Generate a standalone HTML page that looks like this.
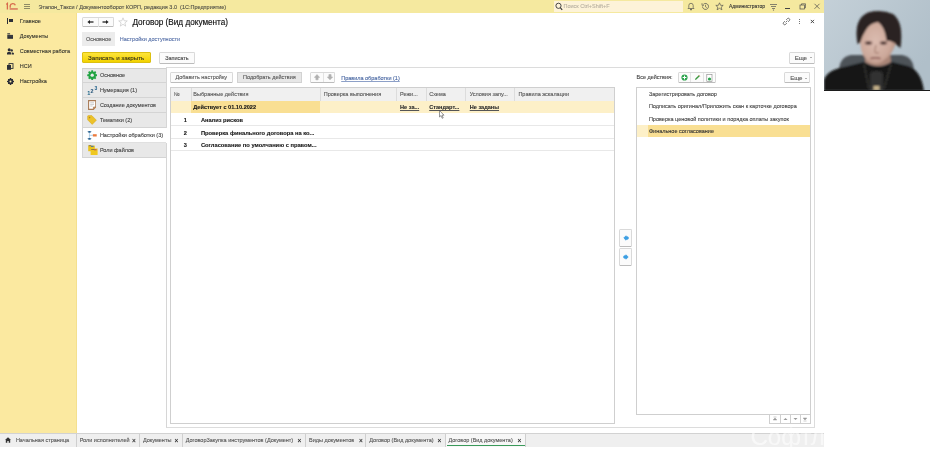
<!DOCTYPE html>
<html><head><meta charset="utf-8">
<style>
*{margin:0;padding:0;box-sizing:border-box}
html,body{width:930px;height:452px;overflow:hidden;background:#fff;font-family:"Liberation Sans",sans-serif;color:#333}
body{position:relative}
html{will-change:transform}
.a{position:absolute}
.t{position:absolute;white-space:nowrap;font-size:5.5px;line-height:7px;color:#404040;-webkit-text-stroke:0.1px currentColor}
.b{font-weight:bold;-webkit-text-stroke:0.1px currentColor}
#top{left:0;top:0;width:824px;height:13px;background:#f5e99f}
#side{left:0;top:13px;width:77px;height:420px;background:#fbe9a0;border-right:1px solid #f4e08e}
#tabs{left:0;top:433px;width:824px;height:14px;background:#efefef;border-top:1px solid #d2d2d2}
#cam{left:824px;top:0;width:106px;height:91px;background:#b4c2cb;overflow:hidden}
.btn{position:absolute;background:#fbfbfb;border:1px solid #d9d9d9;border-bottom-color:#bcbcbc;border-radius:1.5px}
.lnk{color:#4564a0;text-decoration:underline;text-decoration-skip-ink:none;text-decoration-thickness:0.5px;text-underline-offset:0.8px;text-decoration-color:#8da0c8}
.vl{position:absolute;width:1px;background:#dcdcdc}
.hl{position:absolute;height:1px;background:#e8e8e8}
.pi{position:absolute;left:82px;width:84px;height:15px;background:#e8e8e8;border-bottom:1px solid #d4d4d4;border-left:1px solid #d6d6d6}
.tab{position:absolute;top:434px;height:13px;border-left:1px solid #cfcfcf}
.x{position:absolute;font-size:6.5px;line-height:7px;color:#333;font-weight:bold}
</style></head><body>
<!-- ===== TOP BAR ===== -->
<div id="top" class="a"></div>
<svg class="a" style="left:5px;top:2px" width="14" height="9" viewBox="0 0 14 9">
  <path d="M1.3 2.4 L2.4 1.4 L2.4 7.6" stroke="#d86a4c" stroke-width="1.3" fill="none"/>
  <path d="M10.3 3.3 A2.6 2.3 0 0 0 5.2 3.6 L5.2 5.8" stroke="#d86a4c" stroke-width="1.3" fill="none"/>
  <rect x="4.6" y="6.2" width="8.2" height="1.5" fill="#d8765a"/>
</svg>
<div class="a" style="left:24px;top:3.8px;width:6px;height:0.9px;background:#8f8b66"></div>
<div class="a" style="left:24px;top:6px;width:6px;height:0.9px;background:#8f8b66"></div>
<div class="a" style="left:24px;top:8.2px;width:6px;height:0.9px;background:#8f8b66"></div>
<div class="t" style="left:38.5px;top:3.6px;color:#4e4e46">Этапон_Такси / Документооборот КОРП, редакция 3.0&nbsp; (1С:Предприятие)</div>
<div class="a" style="left:554px;top:1px;width:129px;height:11px;background:#fdf3d8"></div>
<svg class="a" style="left:555px;top:2px" width="8" height="9" viewBox="0 0 8 9"><circle cx="3.5" cy="3.8" r="2.6" stroke="#333" stroke-width="0.9" fill="none"/><path d="M5.3 5.7 L7.2 7.8" stroke="#333" stroke-width="1.1"/></svg>
<div class="t" style="left:563.5px;top:3px;color:#b8b0a0">Поиск Ctrl+Shift+F</div>
<!-- bell -->
<svg class="a" style="left:687px;top:2px" width="8" height="9" viewBox="0 0 8 9"><path d="M1 6.5 L1.8 5.5 L1.8 3.5 A2.2 2.2 0 0 1 6.2 3.5 L6.2 5.5 L7 6.5 Z" stroke="#4a4a4a" stroke-width="0.65" fill="none"/><circle cx="4" cy="7.6" r="0.8" fill="#444"/></svg>
<!-- history -->
<svg class="a" style="left:701px;top:2px" width="9" height="9" viewBox="0 0 9 9"><path d="M1.5 4.5 A3 3 0 1 0 2.4 2.3" stroke="#4a4a4a" stroke-width="0.7" fill="none"/><path d="M4.5 2.8 L4.5 4.7 L5.8 5.6" stroke="#4a4a4a" stroke-width="0.65" fill="none"/><path d="M1 1.2 L1 3.3 L3 3.3" stroke="#4a4a4a" stroke-width="0.65" fill="none"/></svg>
<!-- star -->
<svg class="a" style="left:715px;top:2px" width="9" height="9" viewBox="0 0 9 9"><path d="M4.5 0.8 L5.6 3.3 L8.2 3.4 L6.2 5.1 L6.9 7.8 L4.5 6.3 L2.1 7.8 L2.8 5.1 L0.8 3.4 L3.4 3.3 Z" stroke="#4a4a4a" stroke-width="0.65" fill="none"/></svg>
<div class="t" style="left:729px;top:3px;font-size:5px;color:#333">Администратор</div>
<svg class="a" style="left:769px;top:2px" width="9" height="9" viewBox="0 0 9 9"><path d="M1 2.5 H8 M2 4.5 H7 M3 6.5 H6" stroke="#555" stroke-width="0.7"/><circle cx="4.5" cy="8" r="0.6" fill="#555"/></svg>
<div class="a" style="left:785px;top:8px;width:5px;height:1px;background:#444"></div>
<svg class="a" style="left:798px;top:2px" width="9" height="9" viewBox="0 0 9 9"><rect x="2" y="3" width="4.5" height="4" stroke="#4a4a4a" stroke-width="0.7" fill="none"/><path d="M3.5 3 V1.8 H7.5 V5.8 H6.5" stroke="#4a4a4a" stroke-width="0.65" fill="none"/></svg>
<svg class="a" style="left:813px;top:2px" width="8" height="9" viewBox="0 0 8 9"><path d="M1.5 1.8 L6.5 6.8 M6.5 1.8 L1.5 6.8" stroke="#4a4a4a" stroke-width="0.7"/></svg>

<!-- ===== SIDEBAR ===== -->
<div id="side" class="a"></div>
<div class="a" style="left:7px;top:17.7px;width:1.2px;height:6.6px;background:#2d2f38"></div>
<div class="a" style="left:9px;top:18.7px;width:4px;height:3px;background:#2d2f38"></div>
<div class="t" style="left:19.8px;top:17.7px;color:#36362e">Главное</div>
<svg class="a" style="left:7px;top:33px" width="7" height="6" viewBox="0 0 7 6"><rect x="0.3" y="0.3" width="2.8" height="1.1" fill="#2d2f38"/><rect x="0.3" y="1.9" width="5.7" height="3.9" fill="#2d2f38"/><rect x="0.3" y="2.8" width="5.7" height="0.4" fill="#6a6a60"/></svg>
<div class="t" style="left:19.8px;top:32.9px;color:#36362e">Документы</div>
<svg class="a" style="left:7px;top:48px" width="7" height="7" viewBox="0 0 7 7"><circle cx="2.2" cy="1.8" r="1.5" fill="#2d2f38"/><path d="M0 6.5 V4.7 Q2.2 3 4.2 4.7 V6.5Z" fill="#2d2f38"/><circle cx="4.7" cy="2.4" r="1.2" fill="#2d2f38"/><path d="M4.8 6.5 V4.6 Q6 4 6.9 5 V6.5Z" fill="#2d2f38"/></svg>
<div class="t" style="left:19.8px;top:47.8px;color:#36362e">Совместная работа</div>
<svg class="a" style="left:7px;top:63px" width="7" height="7" viewBox="0 0 7 7"><rect x="0" y="2" width="4" height="4.8" fill="#2d2f38"/><rect x="2" y="0.6" width="4" height="4.8" fill="none" stroke="#2d2f38" stroke-width="0.9"/></svg>
<div class="t" style="left:19.8px;top:62.8px;color:#36362e">НСИ</div>
<svg class="a" style="left:7px;top:78px" width="7" height="7" viewBox="0 0 7 7"><circle cx="3.5" cy="3.5" r="2.2" fill="none" stroke="#2d2f38" stroke-width="1.4"/><path d="M3.5 0 V7 M0 3.5 H7 M1 1 L6 6 M6 1 L1 6" stroke="#2d2f38" stroke-width="1"/><circle cx="3.5" cy="3.5" r="1" fill="#fbe9a0"/></svg>
<div class="t" style="left:19.8px;top:77.5px;color:#36362e">Настройка</div>

<!-- ===== TABS BAR ===== -->
<div id="tabs" class="a"></div>
<svg class="a" style="left:5px;top:437px" width="6" height="6" viewBox="0 0 6 6"><path d="M0 3 L3 0.2 L6 3 L5.2 3 L5.2 5.8 L3.7 5.8 L3.7 4 L2.3 4 L2.3 5.8 L0.8 5.8 L0.8 3Z" fill="#333"/></svg>
<div class="t" style="left:15.9px;top:436.5px;color:#555">Начальная страница</div>
<div class="tab" style="left:75.5px"></div>
<div class="t" style="left:79.7px;top:436.5px;color:#555">Роли исполнителей</div><div class="x" style="left:132px;top:436.5px">×</div>
<div class="tab" style="left:139px"></div>
<div class="t" style="left:143px;top:436.5px;color:#555">Документы</div><div class="x" style="left:174.5px;top:436.5px">×</div>
<div class="tab" style="left:181.5px"></div>
<div class="t" style="left:185.7px;top:436.5px;color:#555">ДоговорЗакупка инструментов (Документ)</div><div class="x" style="left:297.5px;top:436.5px">×</div>
<div class="tab" style="left:305px"></div>
<div class="t" style="left:309px;top:436.5px;color:#555">Виды документов</div><div class="x" style="left:359px;top:436.5px">×</div>
<div class="tab" style="left:365px"></div>
<div class="t" style="left:369.3px;top:436.5px;color:#555">Договор (Вид документа)</div><div class="x" style="left:437.5px;top:436.5px">×</div>
<div class="tab" style="left:445px;width:81px;background:#f7f7f7;border-right:1px solid #cfcfcf"></div>
<div class="a" style="left:447px;top:445px;width:78px;height:1px;background:#3a9a5a"></div>
<div class="t" style="left:448.5px;top:436.5px;color:#555">Договор (Вид документа)</div><div class="x" style="left:517.5px;top:436.5px">×</div>

<!-- ===== FORM HEADER ===== -->
<div class="btn" style="left:82px;top:17px;width:31.5px;height:10px"></div>
<div class="a" style="left:97.5px;top:18px;width:1px;height:8.5px;background:#e0e0e0"></div>
<svg class="a" style="left:86.8px;top:19.3px" width="7" height="6" viewBox="0 0 7 6"><path d="M2.5 3 H6.5" stroke="#222" stroke-width="1.3"/><path d="M0.4 3 L3 0.9 L3 5.1Z" fill="#222"/></svg>
<svg class="a" style="left:101.5px;top:19.3px" width="7" height="6" viewBox="0 0 7 6"><path d="M0.5 3 H4.5" stroke="#222" stroke-width="1.3"/><path d="M6.6 3 L4 0.9 L4 5.1Z" fill="#222"/></svg>
<svg class="a" style="left:118px;top:17px" width="10" height="10" viewBox="0 0 10 10"><path d="M5 0.8 L6.2 3.8 L9.3 3.9 L6.9 5.9 L7.7 9.1 L5 7.3 L2.3 9.1 L3.1 5.9 L0.7 3.9 L3.8 3.8 Z" stroke="#c8c8c8" stroke-width="0.7" fill="none"/></svg>
<div class="t" style="left:132.4px;top:17.8px;font-size:8.2px;line-height:10px;color:#111;-webkit-text-stroke:0.15px #111">Договор (Вид документа)</div>
<svg class="a" style="left:782px;top:17px" width="9" height="9" viewBox="0 0 9 9"><path d="M3.6 5.4 L5.4 3.6" stroke="#555" stroke-width="0.8"/><path d="M4.2 2.8 L5.3 1.7 A1.3 1.3 0 0 1 7.3 3.7 L6.2 4.8 M4.8 6.2 L3.7 7.3 A1.3 1.3 0 0 1 1.7 5.3 L2.8 4.2" stroke="#555" stroke-width="0.85" fill="none"/></svg>
<div class="a" style="left:798.5px;top:18.5px;width:1.1px;height:1.1px;background:#777"></div>
<div class="a" style="left:798.5px;top:20.5px;width:1.1px;height:1.1px;background:#777"></div>
<div class="a" style="left:798.5px;top:22.5px;width:1.1px;height:1.1px;background:#777"></div>
<svg class="a" style="left:810px;top:19.2px" width="5" height="5" viewBox="0 0 5 5"><path d="M0.8 0.9 L4 4.1 M4 0.9 L0.8 4.1" stroke="#3a3a3a" stroke-width="0.9"/></svg>

<div class="a" style="left:82px;top:32px;width:33px;height:14px;background:#ececec"></div>
<div class="t" style="left:86px;top:35.8px;color:#555">Основное</div>
<div class="t" style="left:119.8px;top:35.8px;color:#5670a8">Настройки доступности</div>

<div class="a" style="left:82px;top:52px;width:68.5px;height:10.8px;background:linear-gradient(#fde43a,#f2d200);border:1px solid #dcc010;border-radius:1px"></div>
<div class="t" style="left:88px;top:53.8px;font-size:6.2px;color:#1a1a1a;-webkit-text-stroke:0.05px #1a1a1a">Записать и закрыть</div>
<div class="btn" style="left:159.4px;top:52.1px;width:35.2px;height:11.5px"></div>
<div class="t" style="left:165.2px;top:54.5px;color:#444">Записать</div>
<div class="btn" style="left:789.2px;top:52px;width:25.4px;height:11.5px"></div>
<div class="t" style="left:794.8px;top:54.2px;color:#555;font-size:6.2px;letter-spacing:-0.25px">Еще</div>
<div class="a" style="left:810px;top:57.2px;width:0;height:0;border-left:1px solid transparent;border-right:1px solid transparent;border-top:1.4px solid #666"></div>

<!-- ===== LEFT PANEL ===== -->
<div class="pi" style="top:67.5px;border-top:1px solid #d0d0d0"></div>
<div class="pi" style="top:82.5px"></div>
<div class="pi" style="top:97.5px"></div>
<div class="pi" style="top:112.5px"></div>
<div class="pi" style="top:127.5px;background:#fff;border-bottom-color:#e0e0e0"></div>
<div class="pi" style="top:142.5px"></div>
<div class="t" style="left:99.9px;top:72.3px;color:#444">Основное</div>
<div class="t" style="left:99.9px;top:87.3px;color:#444">Нумерация (1)</div>
<div class="t" style="left:99.9px;top:102.3px;color:#444">Создание документов</div>
<div class="t" style="left:99.9px;top:117.3px;color:#444">Тематики (2)</div>
<div class="t" style="left:99.9px;top:132.3px;color:#444">Настройки обработки (3)</div>
<div class="t" style="left:99.9px;top:147.3px;color:#444">Роли файлов</div>
<!-- panel icons -->
<svg class="a" style="left:86.6px;top:69.6px" width="10.4" height="10.4" viewBox="0 0 10 10"><g fill="#22a443"><circle cx="5" cy="5" r="3.6"/><rect x="4.1" y="0.2" width="1.8" height="9.6" rx="0.4"/><rect x="0.2" y="4.1" width="9.6" height="1.8" rx="0.4"/><rect x="4.1" y="0.2" width="1.8" height="9.6" rx="0.4" transform="rotate(45 5 5)"/><rect x="0.2" y="4.1" width="9.6" height="1.8" rx="0.4" transform="rotate(45 5 5)"/></g><circle cx="5" cy="5" r="1.6" fill="#ececec"/></svg>
<svg class="a" style="left:86.5px;top:84.5px" width="11" height="11" viewBox="0 0 11 11"><text x="0.3" y="10" font-size="5.6" font-family="Liberation Sans" font-weight="bold" fill="#1d6487">1</text><text x="3.6" y="7.6" font-size="5.4" font-family="Liberation Sans" font-weight="bold" fill="#1f4f75">2</text><text x="7.5" y="4.5" font-size="5" font-family="Liberation Sans" font-weight="bold" fill="#1e5f8a">3</text></svg>
<svg class="a" style="left:87.8px;top:100px" width="8.4" height="10" viewBox="0 0 8.4 10"><path d="M0.6 0.6 H7.8 V7 L5.4 9.4 H0.6Z" fill="#fff" stroke="#a87a55" stroke-width="1.1"/><path d="M2.2 2.8 H6 M2.2 4.4 H6 M2.2 6 H4.6" stroke="#aaa" stroke-width="0.6"/><path d="M5.4 9.4 V7 H7.8" fill="#c89060" stroke="#a87a55" stroke-width="0.6"/></svg>
<svg class="a" style="left:86.8px;top:114.6px" width="10" height="10" viewBox="0 0 10 10"><path d="M0.6 1.4 Q0.6 0.6 1.4 0.6 L4.8 0.6 L9.4 5.2 L5.2 9.4 L0.6 4.8Z" fill="#ecc22a" stroke="#d4a418" stroke-width="0.5"/><circle cx="2.6" cy="2.6" r="0.8" fill="#b08a20"/></svg>
<svg class="a" style="left:87px;top:129.5px" width="10" height="11" viewBox="0 0 10 11"><path d="M2.4 2.5 V8 M2.4 5.3 H6" stroke="#7ab0d8" stroke-width="0.6"/><path d="M0.4 1.8 Q2.4 0 4.6 1.8 Q2.4 3.6 0.4 1.8Z" fill="#1f5a8a"/><path d="M0.4 8.8 Q2.4 7 4.6 8.8 Q2.4 10.6 0.4 8.8Z" fill="#1f5a8a"/><rect x="5.9" y="4.2" width="3.8" height="2.3" fill="#ec7a3c"/></svg>
<svg class="a" style="left:87.5px;top:144.8px" width="10" height="10.5" viewBox="0 0 10 10.5"><rect x="0.2" y="0.6" width="6.6" height="5.6" fill="#e9c21e"/><rect x="0.6" y="0.2" width="2.6" height="1" fill="#8a7a40"/><rect x="3" y="0.8" width="2.6" height="1" fill="#3a6ab0"/><rect x="2.6" y="3.5" width="7" height="6.5" fill="#efc820"/><rect x="3.2" y="4" width="3" height="1" fill="#8a7a40"/><rect x="6" y="4.2" width="2.6" height="1.1" fill="#c05050"/></svg>

<!-- ===== OUTER GROUP ===== -->
<div class="a" style="left:165.5px;top:67px;width:649.5px;height:360.5px;border:1px solid #dcdcdc;border-left-color:#d6d6d6"></div>
<div class="a" style="left:165.5px;top:127.5px;width:1px;height:15px;background:#fff"></div>

<div class="btn" style="left:170px;top:72px;width:63.4px;height:11px"></div>
<div class="t" style="left:175.5px;top:73.9px;color:#555">Добавить настройку</div>
<div class="a" style="left:237.4px;top:72px;width:64.2px;height:11px;background:#e7e7e7;border:1px solid #d2d2d2"></div>
<div class="t" style="left:243px;top:73.9px;color:#555">Подобрать действия</div>
<div class="btn" style="left:310.3px;top:72px;width:25.1px;height:11px"></div>
<div class="a" style="left:323px;top:73px;width:1px;height:9px;background:#e3e3e3"></div>
<svg class="a" style="left:313.5px;top:74px" width="6" height="7" viewBox="0 0 6 7"><path d="M3 0.6 L5.6 3.4 L4.1 3.4 L4.1 5.8 L1.9 5.8 L1.9 3.4 L0.4 3.4Z" fill="#b0b0b0" stroke="#b0b0b0" stroke-width="0.6" stroke-linejoin="round"/></svg>
<svg class="a" style="left:326.5px;top:74px" width="6" height="7" viewBox="0 0 6 7"><path d="M3 5.8 L5.6 3 L4.1 3 L4.1 0.6 L1.9 0.6 L1.9 3 L0.4 3Z" fill="#b0b0b0" stroke="#b0b0b0" stroke-width="0.6" stroke-linejoin="round"/></svg>
<div class="t lnk" style="left:341.2px;top:74.5px">Правила обработки (1)</div>

<!-- right toolbar -->
<div class="t" style="left:636.5px;top:74.4px;color:#444">Все действия:</div>
<div class="btn" style="left:677.6px;top:72px;width:38.4px;height:11px"></div>
<div class="a" style="left:690.4px;top:73px;width:1px;height:9px;background:#e3e3e3"></div>
<div class="a" style="left:703px;top:73px;width:1px;height:9px;background:#e3e3e3"></div>
<svg class="a" style="left:680.5px;top:74px" width="7" height="7" viewBox="0 0 7 7"><circle cx="3.5" cy="3.5" r="3.1" fill="#2ea44f"/><path d="M3.5 1.6 V5.4 M1.6 3.5 H5.4" stroke="#fff" stroke-width="1"/></svg>
<svg class="a" style="left:693.5px;top:74px" width="7" height="7" viewBox="0 0 7 7"><path d="M1 6 L1.4 4.6 L4.8 1.2 L5.8 2.2 L2.4 5.6Z" fill="#3a9a40"/><path d="M4.8 1.2 L5.8 2.2" stroke="#c07030" stroke-width="0.8"/></svg>
<svg class="a" style="left:706px;top:73.5px" width="7" height="8" viewBox="0 0 7 8"><rect x="0.8" y="0.6" width="5.2" height="6.8" fill="#fff" stroke="#888" stroke-width="0.6"/><circle cx="3.5" cy="5" r="1.6" fill="#2ea44f"/></svg>
<div class="btn" style="left:784.3px;top:72px;width:26px;height:11px"></div>
<div class="t" style="left:790.3px;top:73.6px;color:#555;font-size:6.2px;letter-spacing:-0.25px">Еще</div>
<div class="a" style="left:805px;top:77.5px;width:0;height:0;border-left:1px solid transparent;border-right:1px solid transparent;border-top:1.4px solid #666"></div>

<!-- ===== TABLE ===== -->
<div class="a" style="left:170px;top:87px;width:445px;height:337px;border:1px solid #cfcfcf"></div>
<div class="a" style="left:171px;top:88px;width:443px;height:13px;background:#f0f0f0"></div>
<div class="vl" style="left:190.5px;top:88px;height:13px"></div>
<div class="vl" style="left:320.2px;top:88px;height:13px"></div>
<div class="vl" style="left:396.4px;top:88px;height:13px"></div>
<div class="vl" style="left:425.6px;top:88px;height:13px"></div>
<div class="vl" style="left:465.3px;top:88px;height:13px"></div>
<div class="vl" style="left:514.3px;top:88px;height:13px"></div>
<div class="t" style="left:173.8px;top:90.5px;color:#666">№</div>
<div class="t" style="left:193.3px;top:90.5px;color:#555">Выбранные действия</div>
<div class="t" style="left:323.8px;top:90.5px;color:#555">Проверка выполнения</div>
<div class="t" style="left:400px;top:90.5px;color:#555">Режи...</div>
<div class="t" style="left:429.2px;top:90.5px;color:#555">Схема</div>
<div class="t" style="left:469.7px;top:90.5px;color:#555">Условия запу...</div>
<div class="t" style="left:518.4px;top:90.5px;color:#555">Правила эскалации</div>
<!-- row 1 -->
<div class="a" style="left:171px;top:101px;width:443px;height:11.8px;background:#fdf0c8"></div>
<div class="a" style="left:190.5px;top:101px;width:129.7px;height:11.8px;background:#f9df93"></div>
<div class="t b" style="left:193.3px;top:104px;font-size:5.6px;color:#161616">Действует с 01.10.2022</div>
<div class="t b lnk" style="left:400px;top:104px;font-size:5.6px;color:#2a2a2a;text-decoration-color:#555">Не за...</div>
<div class="t b lnk" style="left:429.2px;top:104px;font-size:5.6px;color:#2a2a2a;text-decoration-color:#555">Стандарт...</div>
<div class="t b lnk" style="left:469.7px;top:104px;font-size:5.6px;color:#2a2a2a;text-decoration-color:#555">Не заданы</div>
<div class="hl" style="left:171px;top:124.6px;width:443px"></div>
<div class="hl" style="left:171px;top:137.5px;width:443px"></div>
<div class="hl" style="left:171px;top:149.9px;width:443px"></div>
<div class="t b" style="left:183.8px;top:117px;font-size:5.6px;color:#161616">1</div>
<div class="t b" style="left:200.9px;top:117px;font-size:5.7px;color:#161616">Анализ рисков</div>
<div class="t b" style="left:183.8px;top:129.5px;font-size:5.6px;color:#161616">2</div>
<div class="t b" style="left:200.9px;top:129.5px;font-size:5.75px;color:#161616">Проверка финального договора на ко...</div>
<div class="t b" style="left:183.8px;top:142px;font-size:5.6px;color:#161616">3</div>
<div class="t b" style="left:200.9px;top:142px;font-size:5.75px;color:#161616">Согласование по умолчанию с правом...</div>
<!-- cursor -->
<svg class="a" style="left:438.5px;top:110px" width="6" height="9" viewBox="0 0 6 9"><path d="M0.5 0.5 L0.5 7 L2 5.6 L3.2 8.3 L4.2 7.9 L3 5.2 L5 5.2Z" fill="#fff" stroke="#333" stroke-width="0.5"/></svg>

<!-- side move buttons -->
<div class="btn" style="left:619.4px;top:229.4px;width:12.3px;height:17.6px"></div>
<div class="btn" style="left:619.4px;top:248.2px;width:12.3px;height:17.6px"></div>
<svg class="a" style="left:622.8px;top:235px" width="6" height="6" viewBox="0 0 6 6"><path d="M0.8 3 L3 0.8 L3.2 1.6 L5.2 2 L5.2 4 L3.2 4.4 L3 5.2Z" fill="#3d9fe3" stroke="#3d9fe3" stroke-width="0.8" stroke-linejoin="round"/></svg>
<svg class="a" style="left:622.8px;top:254px" width="6" height="6" viewBox="0 0 6 6"><path d="M5.2 3 L3 0.8 L2.8 1.6 L0.8 2 L0.8 4 L2.8 4.4 L3 5.2Z" fill="#3d9fe3" stroke="#3d9fe3" stroke-width="0.8" stroke-linejoin="round"/></svg>

<!-- ===== RIGHT LIST ===== -->
<div class="a" style="left:636.3px;top:87.2px;width:174.4px;height:327.5px;border:1px solid #cfcfcf"></div>
<div class="t" style="left:648.9px;top:90.6px;color:#444">Зарегистрировать договор</div>
<div class="t" style="left:648.9px;top:103px;color:#444">Подписать оригинал/Приложить скан к карточке договора</div>
<div class="t" style="left:648.9px;top:115.5px;color:#444">Проверка ценовой политики и порядка оплаты закупок</div>
<div class="a" style="left:637.3px;top:125.2px;width:11px;height:11.9px;background:#fdf0c8"></div>
<div class="a" style="left:648.3px;top:125.2px;width:161.4px;height:11.9px;background:#f9df93"></div>
<div class="t" style="left:648.9px;top:128px;color:#333">Финальное согласование</div>
<!-- scroll buttons -->
<div class="a" style="left:769px;top:414px;width:41.5px;height:9.6px;border:1px solid #cfcfcf;border-top:none"></div>
<div class="vl" style="left:779.6px;top:414px;height:9.6px;background:#cfcfcf"></div>
<div class="vl" style="left:789.5px;top:414px;height:9.6px;background:#cfcfcf"></div>
<div class="vl" style="left:799.8px;top:414px;height:9.6px;background:#cfcfcf"></div>
<svg class="a" style="left:771.5px;top:416px" width="36" height="6" viewBox="0 0 36 6"><path d="M1.5 1 H4.5 M1.2 4 L3 2 L4.8 4Z" stroke="#999" stroke-width="0.5" fill="#999"/><path d="M11.5 4 L13.5 2 L15.5 4Z" fill="#999"/><path d="M21.5 2 L23.5 4 L25.5 2Z" fill="#999"/><path d="M31.5 5 H34.5 M31.2 2 L33 4 L34.8 2Z" stroke="#999" stroke-width="0.5" fill="#999"/></svg>

<div class="a" style="left:740px;top:420px;width:84px;height:32px;overflow:hidden"><div class="t" style="left:10.5px;top:5.2px;font-size:24px;line-height:24px;color:rgba(255,255,255,0.55);filter:blur(0.6px)">Софтлайн</div></div>
<!-- ===== WEBCAM ===== -->
<div id="cam" class="a">
<svg width="106" height="91" viewBox="0 0 106 91">
  <defs>
    <linearGradient id="bg" x1="0" y1="0" x2="1" y2="0.6"><stop offset="0" stop-color="#c4d0d8"/><stop offset="1" stop-color="#b0bfc9"/></linearGradient>
    <filter id="bl" x="-10%" y="-10%" width="120%" height="120%"><feGaussianBlur stdDeviation="0.8"/></filter>
    <radialGradient id="fc" cx="0.42" cy="0.5" r="0.62"><stop offset="0" stop-color="#dbbcb0"/><stop offset="0.65" stop-color="#cda99b"/><stop offset="1" stop-color="#ae8777"/></radialGradient>
  </defs>
  <rect width="106" height="91" fill="url(#bg)"/>
  <g filter="url(#bl)">
  <path d="M15 72 Q15 57 27 55 L78 55 Q90 57 90 72 Z" fill="#4d5259"/>
  <path d="M42 52 L66 52 L67 62 Q54 70 41 62Z" fill="#a98577"/>
  <path d="M0 91 L0 80 Q3 70 20 67 L40 62 Q54 71 68 62 L84 66 Q97 70 100 91 Z" fill="#131313"/>
  <path d="M46 74 Q46 71 52.5 71 Q59 71 59 74 L59 91 L46 91Z" fill="#303030"/>
  <rect x="49.5" y="86" width="6" height="4" fill="#c8b48c"/>
  <path d="M40 64 L45 89 M67 64 L60 89" stroke="#8a8a7a" stroke-width="0.4"/>
  <path d="M36 36 Q35.5 53 43 60.5 Q50.5 66.5 58 62 Q71 53 73 38 Q70 20 54 18 Q38 20 36 36Z" fill="url(#fc)"/>
  <ellipse cx="44.5" cy="43" rx="3.8" ry="1.9" fill="#7e5e58"/>
  <ellipse cx="59.5" cy="43" rx="3.8" ry="1.9" fill="#7e5e58"/>
  <ellipse cx="44.5" cy="43.1" rx="1.6" ry="1.1" fill="#2e2420"/>
  <ellipse cx="59.5" cy="43.1" rx="1.6" ry="1.1" fill="#2e2420"/>
  <path d="M52 45 Q50.5 50 51 52.5 Q53 54 55 52.5" stroke="#9e7668" stroke-width="1" fill="none"/>
  <path d="M46.5 58.5 Q51.5 57 56.5 58.5" stroke="#85524e" stroke-width="1.4" fill="none"/>
  <path d="M33.5 44 Q29 19 44 12.5 Q57 9 69 14 Q80 22 76.5 48 L72.5 45 Q70 41 62.5 40.5 Q61 27 54 22 Q46 23 42 30 Q38 36 36 43 Z" fill="#2a2321"/>
  </g>
  <rect x="0" y="90" width="106" height="1" fill="#1c1c1c"/>
</svg>
</div>
</body></html>
